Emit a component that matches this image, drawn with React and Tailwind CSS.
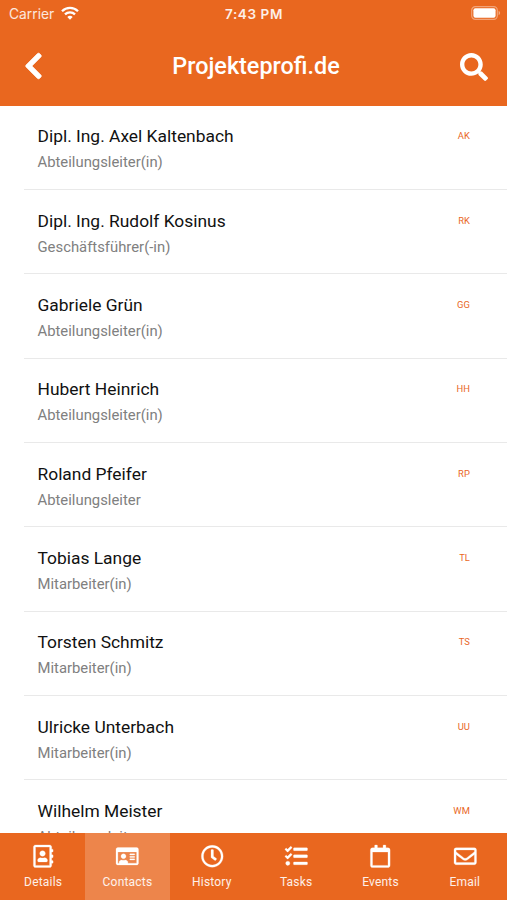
import React from 'react';
import {
  FaChevronLeft,
  FaRegAddressBook,
  FaRegCalendar,
  FaRegClock,
  FaRegEnvelope,
  FaRegIdCard,
  FaSearch,
  FaTasks
} from 'react-icons/fa';

const contacts = [
  { name: 'Dipl. Ing. Axel Kaltenbach', role: 'Abteilungsleiter(in)', initials: 'AK' },
  { name: 'Dipl. Ing. Rudolf Kosinus', role: 'Geschäftsführer(-in)', initials: 'RK' },
  { name: 'Gabriele Grün', role: 'Abteilungsleiter(in)', initials: 'GG' },
  { name: 'Hubert Heinrich', role: 'Abteilungsleiter(in)', initials: 'HH' },
  { name: 'Roland Pfeifer', role: 'Abteilungsleiter', initials: 'RP' },
  { name: 'Tobias Lange', role: 'Mitarbeiter(in)', initials: 'TL' },
  { name: 'Torsten Schmitz', role: 'Mitarbeiter(in)', initials: 'TS' },
  { name: 'Ulricke Unterbach', role: 'Mitarbeiter(in)', initials: 'UU' },
  { name: 'Wilhelm Meister', role: 'Abteilungsleiter', initials: 'WM' }
];

const tabs = [
  { label: 'Details', icon: FaRegAddressBook },
  { label: 'Contacts', icon: FaRegIdCard, active: true },
  { label: 'History', icon: FaRegClock },
  { label: 'Tasks', icon: FaTasks },
  { label: 'Events', icon: FaRegCalendar },
  { label: 'Email', icon: FaRegEnvelope }
];

const StatusBar = () => (
  <div className="grid h-7 grid-cols-3 items-center pl-[9px] pr-[6px] font-['Inter',sans-serif] text-[13.8px] text-white/85">
    <div className="flex items-center gap-[7px]">
      <span>Carrier</span>
      <svg viewBox="0 0 18 14" className="-mt-[2px] h-[14px] w-[18px]" fill="none" stroke="white" strokeWidth="2.3">
        <path d="M1 5.2a11.4 11.4 0 0 1 16 0" />
        <path d="M4 8.4a7.1 7.1 0 0 1 10 0" />
        <path d="M9 13.8 6.3 11a3.9 3.9 0 0 1 5.4 0z" fill="white" stroke="none" />
      </svg>
    </div>
    <span className="-ml-[2px] text-center text-[13.5px] font-semibold tracking-[0.6px] text-white/90">7:43 PM</span>
    <svg viewBox="0 0 30 14" className="-mt-[2px] h-[14px] w-[30px] justify-self-end">
      <rect x="0.7" y="0.7" width="25.6" height="12.6" rx="3.6" fill="none" stroke="white" strokeOpacity="0.4" strokeWidth="1.2" />
      <rect x="2.4" y="2.3" width="22.2" height="9.4" rx="2" fill="white" />
      <path d="M27.6 4.8c2 .8 2 3.6 0 4.4z" fill="white" fillOpacity="0.45" />
    </svg>
  </div>
);

const Header = () => (
  <header className="h-[105.7px] shrink-0 bg-[#e9671f] text-white">
    <StatusBar />
    <div className="flex h-[77px] items-center justify-between pl-6 pr-[19px]">
      <button className="flex w-[28px] pb-px" aria-label="Back">
        <FaChevronLeft className="h-[30px] w-[19px] stroke-white stroke-[14px]" />
      </button>
      <h1 className="pt-px text-[23.4px] font-medium">Projekteprofi.de</h1>
      <button aria-label="Search">
        <FaSearch className="size-[28px]" />
      </button>
    </div>
  </header>
);

const ContactRow = ({ contact }) => (
  <li className="ml-6 flex h-[84.33px] shrink-0 justify-between border-b border-[#e9e9e9] pl-[13.5px] pr-[37px] pt-[18.7px]">
    <div>
      <p className="text-[17.4px] leading-[25px] text-[#111]">{contact.name}</p>
      <p className="text-[14.85px] leading-[26px] text-[#808080]">{contact.role}</p>
    </div>
    <span className="text-[9.4px] leading-[24px] tracking-[0.1px] text-[#e9671f]">{contact.initials}</span>
  </li>
);

const TabBar = () => (
  <nav className="grid h-[67px] shrink-0 grid-cols-6 bg-[#e9671f] pl-px text-white">
    {tabs.map(({ label, icon: Icon, active }) => (
      <button
        key={label}
        className={`flex flex-col items-center pt-[11.5px] ${active ? 'bg-[#ed854b]' : ''}`}
      >
        <Icon className="h-[22.5px] w-auto overflow-visible stroke-white stroke-[6px]" />
        <span className="mt-[5px] text-[12px] leading-[20px] tracking-[0.2px] text-white/90">{label}</span>
      </button>
    ))}
  </nav>
);

const App = () => {
  return (
    <div className="flex h-screen flex-col overflow-hidden bg-white font-['Roboto',sans-serif]">
      <Header />
      <ul className="flex min-h-0 flex-1 flex-col overflow-hidden">
        {contacts.map((contact) => (
          <ContactRow key={contact.initials} contact={contact} />
        ))}
      </ul>
      <TabBar />
    </div>
  );
};

export default App;
